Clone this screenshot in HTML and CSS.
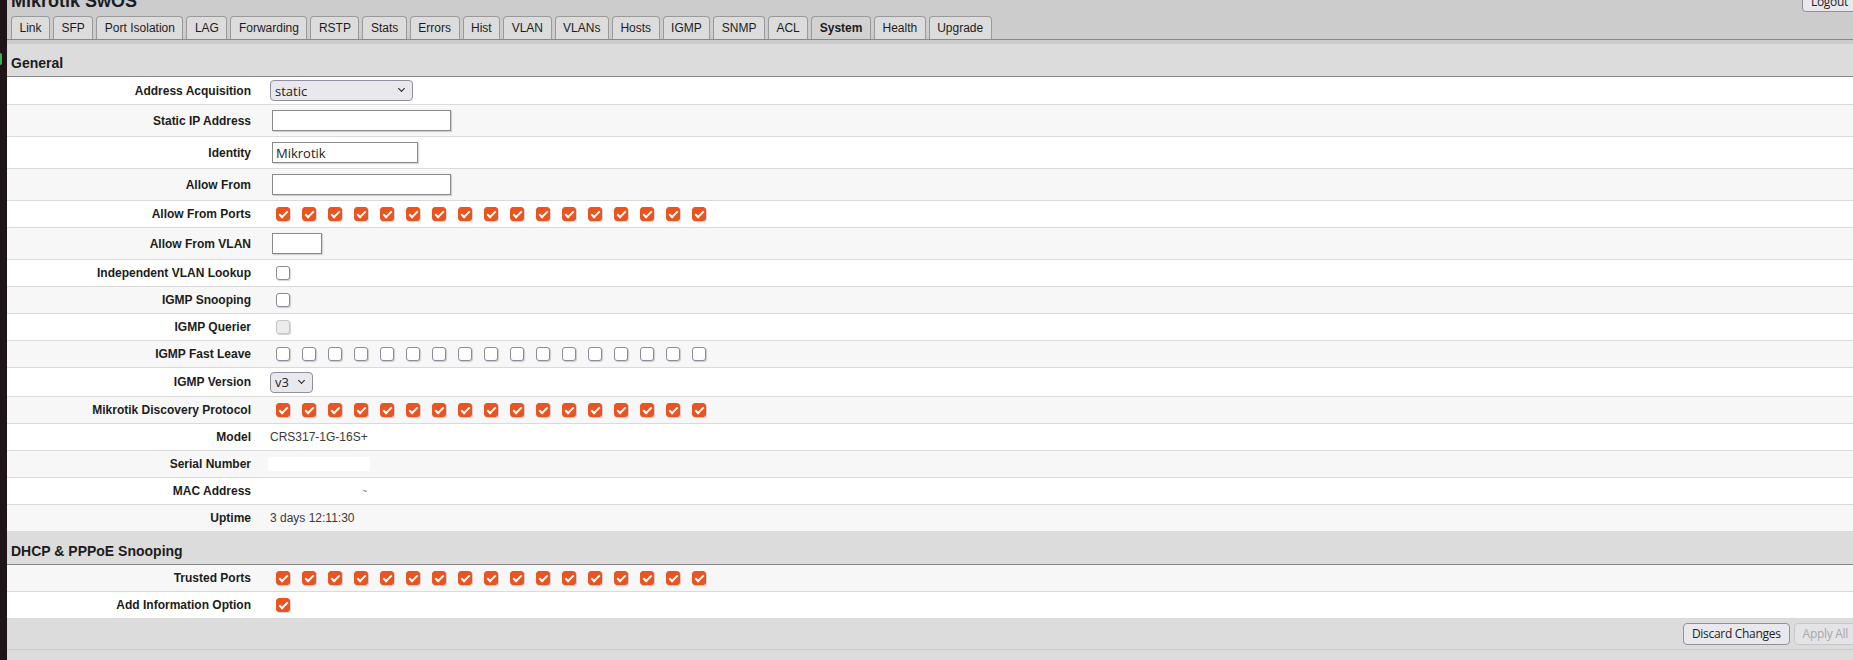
FILE: index.html
```html
<!DOCTYPE html>
<html lang="en">
<head>
  <meta charset="UTF-8">
  <meta name="viewport" content="width=device-width, initial-scale=1.0">
  <title>Mikrotik SwOS - System</title>
  <link rel="stylesheet" href="styles.css">
</head>
<body>
  <div class="desk"></div>

  <div class="app">
    <header class="top">
      <div class="title-row">
        <h1>Mikrotik SwOS</h1>
        <button class="btn">Logout</button>
      </div>
      <nav class="tabs">
        <a class="tab" href="#">Link</a>
        <a class="tab" href="#">SFP</a>
        <a class="tab" href="#">Port Isolation</a>
        <a class="tab" href="#">LAG</a>
        <a class="tab" href="#">Forwarding</a>
        <a class="tab" href="#">RSTP</a>
        <a class="tab" href="#">Stats</a>
        <a class="tab" href="#">Errors</a>
        <a class="tab" href="#">Hist</a>
        <a class="tab" href="#">VLAN</a>
        <a class="tab" href="#">VLANs</a>
        <a class="tab" href="#">Hosts</a>
        <a class="tab" href="#">IGMP</a>
        <a class="tab" href="#">SNMP</a>
        <a class="tab" href="#">ACL</a>
        <a class="tab active" href="#">System</a>
        <a class="tab" href="#">Health</a>
        <a class="tab" href="#">Upgrade</a>
      </nav>
    </header>

    <table class="form">
      <!-- General -->
      <tr class="sec"><th colspan="2">General</th></tr>
      <tr>
        <td class="lbl">Address Acquisition</td>
        <td class="val"><span class="sel wide"><select><option>static</option><option>DHCP with fallback</option></select></span></td>
      </tr>
      <tr>
        <td class="lbl">Static IP Address</td>
        <td class="val"><input class="txt long" type="text" value=""></td>
      </tr>
      <tr>
        <td class="lbl">Identity</td>
        <td class="val"><input class="txt mid" type="text" value="Mikrotik"></td>
      </tr>
      <tr>
        <td class="lbl">Allow From</td>
        <td class="val"><input class="txt long" type="text" value=""></td>
      </tr>
      <tr>
        <td class="lbl">Allow From Ports</td>
        <td class="val">
          <div class="ports">
            <input class="cb" type="checkbox" checked><input class="cb" type="checkbox" checked><input class="cb" type="checkbox" checked><input class="cb" type="checkbox" checked>
            <input class="cb" type="checkbox" checked><input class="cb" type="checkbox" checked><input class="cb" type="checkbox" checked><input class="cb" type="checkbox" checked>
            <input class="cb" type="checkbox" checked><input class="cb" type="checkbox" checked><input class="cb" type="checkbox" checked><input class="cb" type="checkbox" checked>
            <input class="cb" type="checkbox" checked><input class="cb" type="checkbox" checked><input class="cb" type="checkbox" checked><input class="cb" type="checkbox" checked>
            <input class="cb" type="checkbox" checked>
          </div>
        </td>
      </tr>
      <tr>
        <td class="lbl">Allow From VLAN</td>
        <td class="val"><input class="txt short" type="text" value=""></td>
      </tr>
      <tr>
        <td class="lbl">Independent VLAN Lookup</td>
        <td class="val"><div class="ports"><input class="cb" type="checkbox"></div></td>
      </tr>
      <tr>
        <td class="lbl">IGMP Snooping</td>
        <td class="val"><div class="ports"><input class="cb" type="checkbox"></div></td>
      </tr>
      <tr>
        <td class="lbl">IGMP Querier</td>
        <td class="val"><div class="ports"><input class="cb" type="checkbox" disabled></div></td>
      </tr>
      <tr>
        <td class="lbl">IGMP Fast Leave</td>
        <td class="val">
          <div class="ports">
            <input class="cb" type="checkbox"><input class="cb" type="checkbox"><input class="cb" type="checkbox"><input class="cb" type="checkbox">
            <input class="cb" type="checkbox"><input class="cb" type="checkbox"><input class="cb" type="checkbox"><input class="cb" type="checkbox">
            <input class="cb" type="checkbox"><input class="cb" type="checkbox"><input class="cb" type="checkbox"><input class="cb" type="checkbox">
            <input class="cb" type="checkbox"><input class="cb" type="checkbox"><input class="cb" type="checkbox"><input class="cb" type="checkbox">
            <input class="cb" type="checkbox">
          </div>
        </td>
      </tr>
      <tr>
        <td class="lbl">IGMP Version</td>
        <td class="val"><span class="sel small"><select><option>v3</option><option>v2</option></select></span></td>
      </tr>
      <tr>
        <td class="lbl">Mikrotik Discovery Protocol</td>
        <td class="val">
          <div class="ports">
            <input class="cb" type="checkbox" checked><input class="cb" type="checkbox" checked><input class="cb" type="checkbox" checked><input class="cb" type="checkbox" checked>
            <input class="cb" type="checkbox" checked><input class="cb" type="checkbox" checked><input class="cb" type="checkbox" checked><input class="cb" type="checkbox" checked>
            <input class="cb" type="checkbox" checked><input class="cb" type="checkbox" checked><input class="cb" type="checkbox" checked><input class="cb" type="checkbox" checked>
            <input class="cb" type="checkbox" checked><input class="cb" type="checkbox" checked><input class="cb" type="checkbox" checked><input class="cb" type="checkbox" checked>
            <input class="cb" type="checkbox" checked>
          </div>
        </td>
      </tr>
      <tr>
        <td class="lbl">Model</td>
        <td class="val">CRS317-1G-16S+</td>
      </tr>
      <tr>
        <td class="lbl">Serial Number</td>
        <td class="val"><span class="redact"></span></td>
      </tr>
      <tr>
        <td class="lbl">MAC Address</td>
        <td class="val"><span class="tick">~</span></td>
      </tr>
      <tr>
        <td class="lbl">Uptime</td>
        <td class="val">3 days 12:11:30</td>
      </tr>

      <!-- DHCP & PPPoE Snooping -->
      <tr class="sec"><th colspan="2">DHCP &amp; PPPoE Snooping</th></tr>
      <tr>
        <td class="lbl">Trusted Ports</td>
        <td class="val">
          <div class="ports">
            <input class="cb" type="checkbox" checked><input class="cb" type="checkbox" checked><input class="cb" type="checkbox" checked><input class="cb" type="checkbox" checked>
            <input class="cb" type="checkbox" checked><input class="cb" type="checkbox" checked><input class="cb" type="checkbox" checked><input class="cb" type="checkbox" checked>
            <input class="cb" type="checkbox" checked><input class="cb" type="checkbox" checked><input class="cb" type="checkbox" checked><input class="cb" type="checkbox" checked>
            <input class="cb" type="checkbox" checked><input class="cb" type="checkbox" checked><input class="cb" type="checkbox" checked><input class="cb" type="checkbox" checked>
            <input class="cb" type="checkbox" checked>
          </div>
        </td>
      </tr>
      <tr>
        <td class="lbl">Add Information Option</td>
        <td class="val"><div class="ports"><input class="cb" type="checkbox" checked></div></td>
      </tr>
    </table>

    <div class="actions">
      <button class="btn">Discard Changes</button>
      <button class="btn" disabled>Apply All</button>
    </div>
  </div>
</body>
</html>
```

FILE: styles.css
```css
html, body{height: 100%; overflow: hidden;}
body{
  margin: 0;
  display: flex;
  background: #dcdcdc;
  font-family: "Liberation Sans", Arial, sans-serif;
  font-size: 12px;
  color: #1c1c1c;
}

/* 왼쪽 바탕화면 띠 */
.desk{
  width: 7px; flex: none;
  background: #1f1418;
  display: flex; flex-direction: column;
}
.desk::before{
  content: "";
  width: 2px; height: 12px;
  margin-top: 53px;
  background: #3bb34a;
  border-radius: 0 6px 6px 0;
}

.app{flex: 1; min-width: 0; margin-right: -4px;}

/* 상단 제목 + 탭 */
.top{background: #cccccc; padding-bottom: 4px;}
.title-row{
  display: flex; justify-content: space-between; align-items: center;
  height: 22px; margin-top: -10px; padding-left: 4px;
}
.title-row h1{margin: 0; font-size: 18px; line-height: 22px; font-weight: bold; color: #1c1c1c;}

.tabs{
  display: flex; gap: 3px; align-items: flex-end;
  margin-top: 4px; padding-left: 4px;
  border-bottom: 1px solid #888;
}
.tab{
  box-sizing: border-box;
  height: 23px; line-height: 22px;
  padding: 0 7.5px;
  border: 1px solid #9a9a9a; border-bottom: none;
  border-radius: 4px 4px 0 0;
  background: #dcdcdc;
  color: #1c1c1c; text-decoration: none;
}
.tab.active{font-weight: bold; background: #d2d2d2;}

/* 폼 테이블 */
.form{width: 100%; border-collapse: collapse;}
.form tr{background: #fff;}
.form tr:nth-child(odd){background: #f7f7f7;}
.form td{border-bottom: 1px solid #dadada; vertical-align: middle;}
.form tr.sec{background: #dcdcdc;}
.form tr.sec th{
  text-align: left;
  font-size: 14px; line-height: 17px; font-weight: bold;
  padding: 11px 4px 4px;
  border-bottom: 1px solid #888;
}
.lbl{
  width: 244px;
  padding: 4px 10px 4px 0;
  text-align: right; font-weight: bold;
  line-height: 18px;
  white-space: nowrap;
}
.val{padding: 3px 9px; line-height: 20px; color: #3a3a3a;}

.ports{display: flex; gap: 12px; align-items: center; height: 20px; padding-left: 6px;}

.cb{
  appearance: none; -webkit-appearance: none;
  box-sizing: border-box;
  width: 14px; height: 14px; margin: 0;
  border: 1px solid #8b8b9b; border-radius: 3px;
  background: #fff;
  box-shadow: 1px 1px 1px rgba(0,0,0,.18);
  position: relative; flex: none;
}
.cb:checked{background: #e95420; border-color: #e95420;}
.cb:checked::after{
  content: "";
  position: absolute; left: 4px; top: 1px;
  width: 3px; height: 7px;
  border: solid #fff; border-width: 0 2px 2px 0;
  transform: rotate(45deg);
}
.cb:disabled{background: #ececec; border-color: #c6c6c6;}

.txt{
  box-sizing: border-box;
  height: 21px; margin: 2px 0 2px 2px;
  padding: 0 3px;
  border: 1px solid #8a8a8a;
  box-shadow: 1px 1px 1px rgba(0,0,0,.15);
  font-family: "Open Sans", sans-serif; font-size: 13px; color: #222;
  vertical-align: middle;
}
.txt.long{width: 179px;}
.txt.mid{width: 146px;}
.txt.short{width: 50px;}

.sel{position: relative; display: inline-block; vertical-align: middle;}
.sel select{
  appearance: none; -webkit-appearance: none;
  box-sizing: border-box;
  height: 21px; margin: 0;
  padding: 0 20px 0 4px;
  border: 1px solid #8f8f9d; border-radius: 4px;
  background: #e9e9ed;
  font-family: "Open Sans", sans-serif; font-size: 13px; color: #222;
  display: block;
}
.sel.wide select{width: 143px;}
.sel.small select{width: 43px;}
.sel::after{
  content: "";
  position: absolute; right: 9px; top: 6px;
  width: 4px; height: 4px;
  border: solid #222; border-width: 0 1.5px 1.5px 0;
  transform: rotate(45deg);
  pointer-events: none;
}

.redact{display: inline-block; width: 102px; height: 14px; margin-left: -2px; background: #fff; vertical-align: middle;}
.tick{margin-left: 92px; font-size: 9px; color: #777; vertical-align: top;}

/* 하단 버튼 */
.actions{
  display: flex; justify-content: flex-end; align-items: center; gap: 4px;
  height: 30px;
  border-bottom: 1px solid #c9c9c9;
}
.btn{
  box-sizing: border-box;
  height: 22px; padding: 0 8px;
  border: 1px solid #8f8f9d; border-radius: 4px;
  background: #e9e9ed;
  font-family: "Open Sans", sans-serif; font-size: 12px; letter-spacing: -0.3px; color: #222;
}
.btn:disabled{color: #a8a8a8; border-color: #c6c6cc; background: #e4e4e6;}
```
